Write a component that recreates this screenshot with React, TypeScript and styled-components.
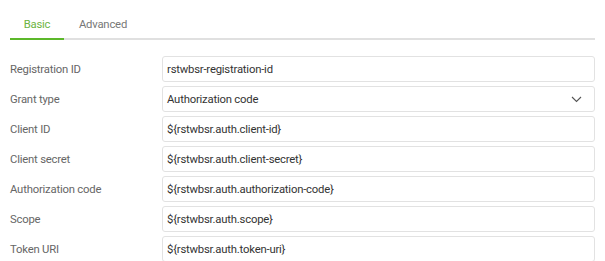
import React from "react";
import styled, { createGlobalStyle } from "styled-components";

const GlobalStyle = createGlobalStyle`
  body {
    margin: 0;
    background: #fff;
    font-family: Roboto, "Noto Sans", sans-serif;
    letter-spacing: -0.2px;
  }
`;

// Contenedor principal
const Page = styled.div`
  width: 585px;
  padding: 0 10px;
`;

const TabBar = styled.div`
  display: flex;
  height: 38px;
  border-bottom: 2px solid #e0e0e0;
  margin-bottom: 16px;
`;

const Tab = styled.div<{ active?: boolean; w: number }>`
  width: ${(p) => p.w}px;
  display: flex;
  align-items: center;
  justify-content: center;
  padding-top: 10px;
  box-sizing: border-box;
  font-size: 11.3px;
  color: ${(p) => (p.active ? "#6cb33f" : "#777")};
  margin-bottom: -2px;
  border-bottom: 2px solid ${(p) => (p.active ? "#5cb82a" : "transparent")};
`;

const Form = styled.div`
  display: flex;
  flex-direction: column;
  gap: 4px;
`;

const Row = styled.div`
  display: grid;
  grid-template-columns: 152px 1fr;
  align-items: center;
`;

const Label = styled.div`
  font-size: 11.3px;
  color: #666;
`;

const Field = styled.div`
  height: 26px;
  box-sizing: border-box;
  border: 1px solid #e2e2e2;
  border-radius: 3px;
  display: flex;
  align-items: center;
  justify-content: space-between;
  padding: 0 12px 0 4px;
  font-size: 11.3px;
  color: #333;
`;

const Chevron = () => (
  <svg width="11" height="7" viewBox="0 0 11 7">
    <path d="M1 1l4.5 4.5L10 1" fill="none" stroke="#555" strokeWidth="1.1" />
  </svg>
);

const fields: { label: string; value: string; select?: boolean }[] = [
  { label: "Registration ID", value: "rstwbsr-registration-id" },
  { label: "Grant type", value: "Authorization code", select: true },
  { label: "Client ID", value: "${rstwbsr.auth.client-id}" },
  { label: "Client secret", value: "${rstwbsr.auth.client-secret}" },
  { label: "Authorization code", value: "${rstwbsr.auth.authorization-code}" },
  { label: "Scope", value: "${rstwbsr.auth.scope}" },
  { label: "Token URI", value: "${rstwbsr.auth.token-uri}" },
];

const App: React.FC = () => {
  return (
    <Page>
      <GlobalStyle />
      <TabBar>
        <Tab active w={54}>Basic</Tab>
        <Tab w={78}>Advanced</Tab>
      </TabBar>
      <Form>
        {fields.map((f) => (
          <Row key={f.label}>
            <Label>{f.label}</Label>
            <Field>
              <span>{f.value}</span>
              {f.select && <Chevron />}
            </Field>
          </Row>
        ))}
      </Form>
    </Page>
  );
};

export default App;
